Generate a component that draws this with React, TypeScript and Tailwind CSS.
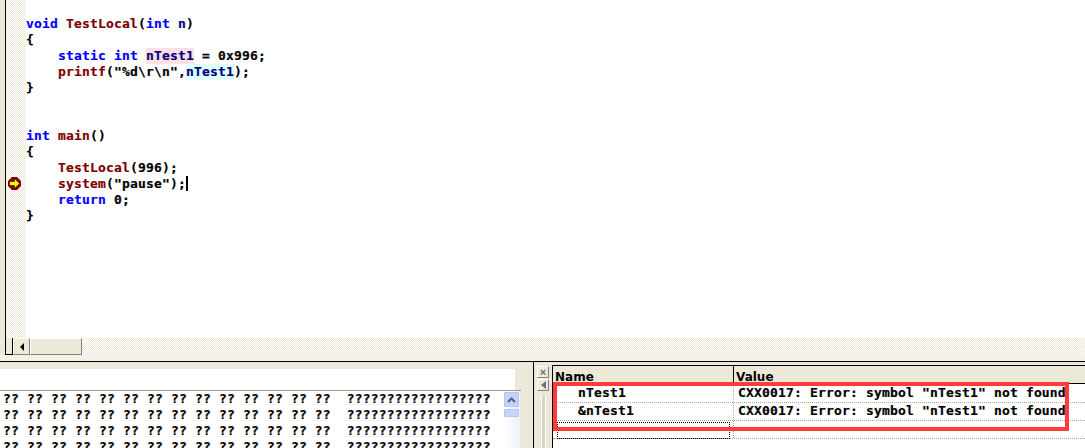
import type { ReactNode } from "react";

const mono = "font-['DejaVu_Sans_Mono',monospace] font-bold text-[13px] tracking-[0.17px] leading-[16px] whitespace-pre [-webkit-text-stroke:0.2px]";
const head = "font-['DejaVu_Sans',sans-serif] font-bold text-[12px] leading-[17px] whitespace-pre pt-[3px]";

const kw = "text-[#0000ff]";
const fn = "text-[#800000]";
const id = "text-[#000080]";

const hatch = "bg-[repeating-conic-gradient(#ece9d8_0%_25%,#ffffff_0%_50%)] bg-[length:2px_2px]";
const raised = "bg-[#ece9d8] border border-t-white border-l-white border-r-[#808080] border-b-[#808080]";

const MEM_ROW = "?? ?? ?? ?? ?? ?? ?? ?? ?? ?? ?? ?? ?? ??  ??????????????????";

function Line({ children }: { children?: ReactNode }) {
  return <div className="h-4 text-black">{children}</div>;
}

function BreakArrow() {
  return (
    <svg width="13" height="13" viewBox="0 0 13 13" className="block">
      <polygon points="4,0 9,0 13,4 13,9 9,13 4,13 0,9 0,4" fill="#800000" />
      <polygon points="1.5,4.5 6.5,4.5 6.5,1.5 11.5,6.5 6.5,11.5 6.5,8.5 1.5,8.5" fill="#ffff00" stroke="#000000" strokeWidth="0.5" />
    </svg>
  );
}

function Code() {
  return (
    <div className={`${mono} pt-4 bg-white flex-1 min-w-0`}>
      <Line>
        <span className={kw}>void</span> <span className={fn}>TestLocal</span>(<span className={kw}>int</span>{" "}
        <span className={id}>n</span>)
      </Line>
      <Line>{"{"}</Line>
      <Line>
        {"    "}
        <span className={kw}>static</span> <span className={kw}>int</span>{" "}
        <span className={`${id} inline-block bg-[#ffe0e0]`}>nTest1</span> = 0x996;
      </Line>
      <Line>
        {"    "}
        <span className={fn}>printf</span>("%d\r\n",<span className={`${id} inline-block bg-[#e0ffff]`}>nTest1</span>);
      </Line>
      <Line>{"}"}</Line>
      <Line />
      <Line />
      <Line>
        <span className={kw}>int</span> <span className={fn}>main</span>()
      </Line>
      <Line>{"{"}</Line>
      <Line>
        {"    "}
        <span className={fn}>TestLocal</span>(996);
      </Line>
      <Line>
        {"    "}
        <span className={fn}>system</span>("pause");
        <span className="inline-block w-[2px] h-[15px] bg-black align-[-3px]" />
      </Line>
      <Line>
        {"    "}
        <span className={kw}>return</span> 0;
      </Line>
      <Line>{"}"}</Line>
    </div>
  );
}

function Editor() {
  return (
    <div className="h-[355px] flex flex-col">
      <div className="flex-1 flex min-h-0">
        <div className="w-[5px] bg-[#ece9d8]" />
        <div className="w-px bg-black" />
        <div className={`w-5 ${hatch} flex flex-col pt-[177px] pl-[2px]`}>
          <BreakArrow />
        </div>
        <Code />
      </div>
      <div className={`h-[17px] flex ${hatch}`}>
        <div className="w-[5px] bg-[#ece9d8]" />
        <div className="w-[8px] bg-[#ece9d8] border-l border-b border-r border-black" />
        <div className={`${raised} w-[17px] flex items-center justify-center`}>
          <div className="w-0 h-0 border-y-[4px] border-y-transparent border-r-[4px] border-r-black" />
        </div>
        <div className={`${raised} w-[52px]`} />
      </div>
    </div>
  );
}

function MemoryPane() {
  return (
    <div className="w-[533px] shrink-0 bg-[#ece9d8] flex flex-col min-h-0 pt-[7px]">
      <div className="h-[21px] w-[515px] bg-white" />
      <div className="h-px w-[521px] bg-[#9d9a8c]" />
      <div className="flex-1 flex min-h-0">
        <div className={`w-[503px] bg-white overflow-hidden text-black ${mono} pl-[3px]`}>
          <div>{MEM_ROW}</div>
          <div>{MEM_ROW}</div>
          <div>{MEM_ROW}</div>
          <div>{MEM_ROW}</div>
        </div>
        <div className="w-[17px] bg-gradient-to-r from-white to-[#eef1fb] flex flex-col items-center">
          <div className="w-[15px] h-[15px] mt-[1px] bg-[#c2d2fb] border border-[#b3c5ef] flex items-center justify-center rounded-[1px]">
            <svg width="9" height="6" viewBox="0 0 9 6">
              <path d="M1 5 L4.5 1.5 L8 5" fill="none" stroke="#4d6185" strokeWidth="2" />
            </svg>
          </div>
          <div className="w-[15px] h-[8px] mt-[2px] bg-[#c6d5fb] border border-[#b3c5ef] rounded-[1px]" />
        </div>
      </div>
    </div>
  );
}

function WatchRow({ name, value }: { name?: string; value?: string }) {
  return (
    <div className="h-[18px] flex border-b border-dotted border-[#aca899] text-black">
      <div className="w-[181px] shrink-0 pl-[25px] border-r border-dotted border-[#aca899]">{name}</div>
      <div className="pl-[4px] flex-1">{value}</div>
    </div>
  );
}

function WatchPane() {
  return (
    <div className="flex-1 flex min-w-0 min-h-0">
      <div className="w-px bg-black" />
      <div className="w-[18px] bg-[#ece9d8] flex flex-col pl-[3px] pt-[4px]">
        <div className={`${raised} w-[12px] h-[12px] flex items-center justify-center text-[#6e6e6e] text-[11px] leading-none font-bold font-['Liberation_Sans',sans-serif]`}>
          ×
        </div>
        <div className={`${raised} w-[12px] h-[12px] mt-px flex items-center justify-center`}>
          <div className="w-0 h-0 border-y-[4px] border-y-transparent border-r-[5px] border-r-[#6e6e6e]" />
        </div>
        <div className="w-[5px] flex-1 mt-[4px] ml-[4px] border-x border-white bg-[#d8d5c6]" />
      </div>
      <div className="flex-1 min-w-0 bg-[#ece9d8] flex flex-col pt-[3px]">
        <div className="h-px bg-black" />
        <div className="h-[17px] flex border-l border-black text-black overflow-hidden">
          <div className={`w-[181px] pl-[2px] border-r border-black ${head}`}>Name</div>
          <div className={`pl-[2px] ${head}`}>Value</div>
        </div>
        <div className="h-px bg-black" />
        <div className={`flex-1 bg-white border-l border-black relative ${mono} pt-px`}>
          <WatchRow name="nTest1" value={'CXX0017: Error: symbol "nTest1" not found'} />
          <WatchRow name="&nTest1" value={'CXX0017: Error: symbol "nTest1" not found'} />
          <WatchRow />
          <div className="absolute left-[4px] top-[38px] w-[173px] h-[17px] border border-dotted border-black" />
          <div className="absolute left-0 top-[-2px] w-[516px] h-[49px] border-[4px] border-[#ff3b3b]" />
        </div>
      </div>
    </div>
  );
}

export default function App() {
  return (
    <div className="w-[1085px] h-[448px] overflow-hidden bg-white flex flex-col">
      <Editor />
      <div className="h-[6px] bg-[#f4f2e8]" />
      <div className="h-px bg-black" />
      <div className="flex-1 flex min-h-0 bg-[#ece9d8]">
        <MemoryPane />
        <WatchPane />
      </div>
    </div>
  );
}
